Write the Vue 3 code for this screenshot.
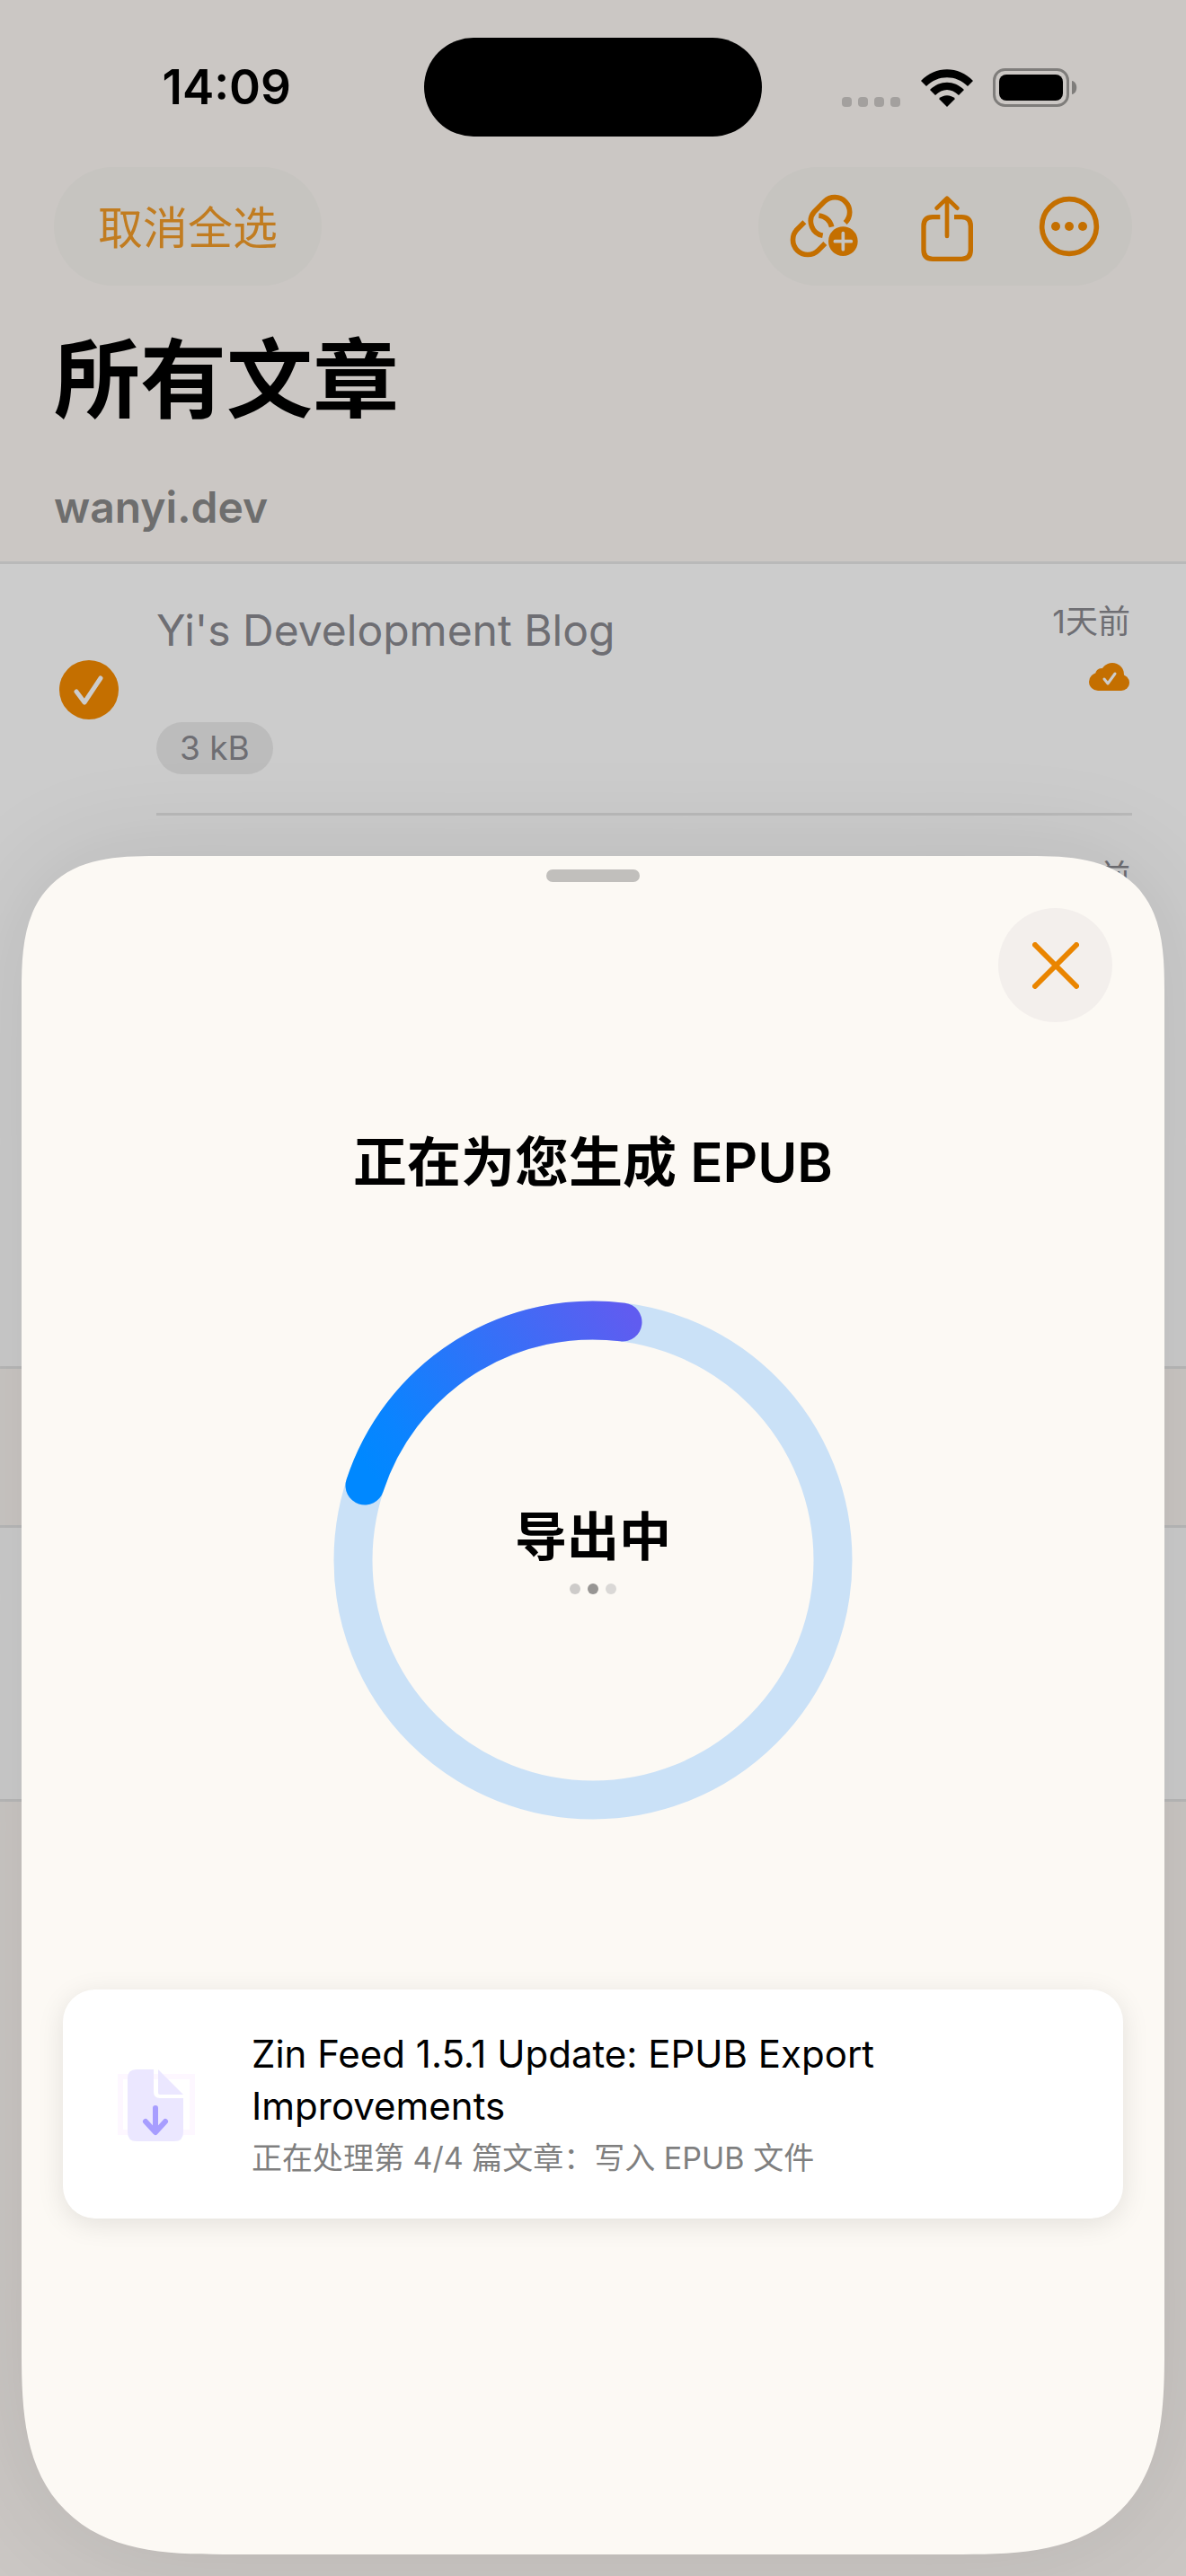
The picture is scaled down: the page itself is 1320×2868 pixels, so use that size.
<script setup>
import { ref } from 'vue'

const selected = ref(true)
const steps = ['rest', 'active', 'faint']
</script>

<template>
  <div class="screen">
    <div class="status">
      <time class="clock">14:09</time>
      <div class="island"></div>
      <div class="indicators">
        <div class="signal"><i v-for="n in 4" :key="n"></i></div>
        <svg class="wifi" viewBox="0 0 58 42" aria-hidden="true">
          <path d="M0 13C16 -4 42 -4 58 13L52 19C39 6 19 6 6 19Z" />
          <path d="M10 23C21 12 37 12 48 23L42 29C34 21 24 21 16 29Z" />
          <path d="M20 33C25 28 33 28 38 33L29 42Z" />
        </svg>
        <svg class="battery" viewBox="0 0 94 43" aria-hidden="true">
          <rect x="1.5" y="1.5" width="82" height="40" rx="12" fill="none" stroke="#7f7d7b" stroke-width="3" />
          <rect x="7" y="7" width="71" height="29" rx="8" />
          <path d="M88 14C95 15 95 28 88 29Z" fill="#7f7d7b" />
        </svg>
      </div>
    </div>

    <header class="toolbar">
      <button type="button" class="pill deselect">取消全选</button>
      <div class="pill actions">
        <button type="button" aria-label="link">
          <svg width="78" height="72" viewBox="60 78 234 216" fill="none" stroke="#c46f00" stroke-width="17">
            <path d="M245 174A49 49 0 0 0 176 103L142 137A49 49 0 0 0 170 217" />
            <path d="M109 172L85 196A49 49 0 0 0 155 266L178 243" />
            <path d="M157 150A48 48 0 0 1 200 188" />
            <circle cx="238" cy="236" r="49" fill="#c46f00" stroke="none" />
            <path d="M211 236H265M238 209V263" stroke="#c6c4c0" stroke-width="11" stroke-linecap="round" />
          </svg>
        </button>
        <button type="button" aria-label="share">
          <svg width="60" height="80" viewBox="494 66 180 240" fill="none" stroke="#c46f00" stroke-width="16">
            <path d="M561 155H536Q506 155 506 185V265Q506 295 536 295H633Q663 295 663 265V185Q663 155 633 155H608" />
            <path d="M584 94V219M550 125L584 92L618 125" stroke-width="14" stroke-linecap="round" stroke-linejoin="round" />
          </svg>
        </button>
        <button type="button" aria-label="more">
          <svg width="68" height="68" viewBox="0 0 204 204" fill="#c46f00">
            <circle cx="102" cy="102" r="91" fill="none" stroke="#c46f00" stroke-width="17" />
            <circle cx="57" cy="102" r="15" />
            <circle cx="102" cy="102" r="15" />
            <circle cx="147" cy="102" r="15" />
          </svg>
        </button>
      </div>
    </header>

    <h1>所有文章</h1>
    <h2>wanyi.dev</h2>

    <section class="group articles">
      <article class="row">
        <label class="check">
          <input v-model="selected" type="checkbox" aria-label="Yi's Development Blog" />
          <svg v-if="selected" viewBox="0 0 66 66" aria-hidden="true">
            <path d="M19 35L28 47L46 20" />
          </svg>
        </label>
        <div class="body">
          <div class="main">
            <h3>Yi's Development Blog</h3>
            <span class="size">3 kB</span>
          </div>
          <div class="meta">
            <time>1天前</time>
            <svg width="46" height="32" viewBox="0 0 46 32" aria-hidden="true">
              <g fill="#c46f00">
                <circle cx="10" cy="21" r="10" />
                <circle cx="14" cy="13" r="7" />
                <circle cx="26" cy="13" r="13" />
                <circle cx="36" cy="22" r="9" />
                <path d="M10 12H36V31H10Z" />
              </g>
              <path d="M17 18L21 23L29 12" fill="none" stroke="#cccccc" stroke-width="3" stroke-linecap="round" stroke-linejoin="round" />
            </svg>
          </div>
        </div>
      </article>
      <article class="row">
        <div class="check"></div>
        <div class="body">
          <div class="main"></div>
          <div class="meta"><time>1天前</time></div>
        </div>
      </article>
    </section>
    <section class="group following"></section>

    <div class="overlay">
      <main class="sheet" role="dialog" aria-labelledby="sheet-title">
        <div class="grabber"></div>
        <button type="button" class="close" aria-label="close">
          <svg width="52" height="52" viewBox="0 0 52 52" aria-hidden="true">
            <path d="M3 3L49 49M49 3L3 49" />
          </svg>
        </button>
        <h2 id="sheet-title" class="title">正在为您生成 EPUB</h2>
        <div class="progress">
          <svg class="ring" viewBox="0 0 578 578" aria-hidden="true">
            <defs>
              <linearGradient id="arc" gradientUnits="userSpaceOnUse" x1="60" y1="220" x2="340" y2="30">
                <stop offset="0" stop-color="#0088ff" />
                <stop offset="0.15" stop-color="#0a84ff" />
                <stop offset="1" stop-color="#605cf0" />
              </linearGradient>
            </defs>
            <circle cx="289" cy="289" r="267" stroke="#cae1f7" />
            <path d="M35 206A267 267 0 0 1 322 24" stroke="url(#arc)" stroke-linecap="round" />
          </svg>
          <div class="state">
            <strong>导出中</strong>
            <div class="dots"><i v-for="s in steps" :key="s" :class="s"></i></div>
          </div>
        </div>
        <section class="card">
          <svg class="file" width="88" height="82" viewBox="0 0 88 82" aria-hidden="true">
            <rect x="4" y="8" width="80" height="62" fill="none" stroke="#fdf7ff" stroke-width="6" />
            <path d="M22 0H41V25Q41 32 48 32H74V70Q74 80 64 80H22Q12 80 12 70V10Q12 0 22 0Z" fill="#ebe7ff" />
            <path d="M46 0L74 28H48Q46 28 46 26Z" fill="#ebe7ff" />
            <path d="M43 43V69M32 58L43 70L54 58" fill="none" stroke="#a79dff" stroke-width="6" stroke-linecap="round" stroke-linejoin="round" />
          </svg>
          <div class="info">
            <p class="name">Zin Feed 1.5.1 Update: EPUB Export Improvements</p>
            <p class="step">正在处理第 4/4 篇文章：写入 EPUB 文件</p>
          </div>
        </section>
      </main>
    </div>
  </div>
</template>

<style>
body {
  margin: 0;
}
</style>

<style scoped>
* {
  box-sizing: border-box;
}

.screen {
  position: relative;
  min-height: 100vh;
  overflow: hidden;
  background: #cbc7c4;
  color: #000;
  font-family: Inter, "Noto Sans CJK SC", sans-serif;
}

h1, h2, h3, p {
  margin: 0;
}

button {
  padding: 0;
  border: 0;
  background: none;
  font: inherit;
}

svg {
  display: block;
}

.status {
  display: grid;
  grid-template-columns: 1fr auto 1fr;
  align-items: center;
  padding: 42px 0 34px;
}

.clock {
  justify-self: end;
  margin-right: 148px;
  font-size: 53px;
  font-weight: 600;
}

.island {
  width: 376px;
  height: 110px;
  border-radius: 55px;
  background: #000;
}

.indicators {
  display: flex;
  align-items: flex-end;
  margin-left: 89px;
}

.signal {
  display: flex;
  gap: 7px;
}

.signal i {
  width: 11px;
  height: 11px;
  border-radius: 4px;
  background: #a3a09e;
}

.wifi {
  width: 58px;
  height: 42px;
  margin-left: 23px;
}

.battery {
  width: 94px;
  height: 43px;
  margin-left: 22px;
}

.toolbar {
  display: flex;
  justify-content: space-between;
  padding: 0 60px;
}

.pill {
  height: 132px;
  border-radius: 66px;
  background: #c6c4c0;
}

.deselect {
  padding: 0 49px 4px;
  color: #c17c20;
  font-size: 50px;
}

.actions {
  display: flex;
  padding: 0 2px 0 6px;
}

.actions button {
  display: grid;
  place-items: center;
  width: 136px;
}

h1 {
  padding: 34px 60px 0;
  font-size: 96px;
  line-height: 140px;
}

h2 {
  padding: 43px 60px 0;
  color: #6e6e6e;
  font-size: 48px;
  font-weight: 600;
  line-height: 60px;
}

.group {
  border: solid #b9b9b9;
  border-width: 3px 0;
  background: #ccc;
}

.articles {
  min-height: 899px;
  margin-top: 30px;
}

.following {
  min-height: 308px;
  margin-top: 174px;
}

.row {
  display: flex;
  padding: 0 60px 0 66px;
}

.row + .row {
  padding-top: 4px;
}

.check {
  display: grid;
  place-items: center;
  width: 108px;
  justify-content: start;
}

.check > * {
  grid-area: 1 / 1;
  width: 66px;
  height: 66px;
}

.check input {
  margin: 0;
  border-radius: 50%;
  appearance: none;
  background: #c46f00;
}

.check path {
  fill: none;
  stroke: #ccc;
  stroke-width: 5;
  stroke-linecap: round;
  stroke-linejoin: round;
}

.body {
  display: flex;
  flex: 1;
  justify-content: space-between;
  min-height: 280px;
  padding-top: 40px;
  border-bottom: 3px solid #b9b9b9;
  color: #6e6e73;
}

.main {
  display: flex;
  flex-direction: column;
  align-items: flex-start;
  gap: 68px;
}

h3 {
  font-size: 48px;
  font-weight: 400;
  line-height: 68px;
}

.size {
  padding: 0 26px;
  border-radius: 29px;
  background: #bcbcbc;
  font-size: 37px;
  line-height: 58px;
}

.meta {
  display: flex;
  flex-direction: column;
  align-items: flex-end;
  gap: 22px;
  padding-right: 2px;
  font-size: 36px;
  line-height: 48px;
}

.overlay {
  position: absolute;
  inset: 0;
  display: flex;
  padding: 953px 24px 24px;
}

.sheet {
  display: flex;
  flex: 1;
  flex-direction: column;
  padding: 15px 46px;
  border-radius: 108px 108px 162px 162px;
  background: #fcf9f4;
  box-shadow: 0 0 120px rgb(0 0 0 / 10%);
}

@supports (corner-shape: squircle) {
  .sheet {
    border-radius: 150px 150px 225px 225px;
    corner-shape: superellipse(1.5);
  }
}

.grabber {
  align-self: center;
  width: 104px;
  height: 14px;
  border-radius: 7px;
  background: #c1bfbc;
}

.close {
  display: grid;
  place-items: center;
  align-self: flex-end;
  width: 127px;
  height: 127px;
  margin: 29px 12px 0 0;
  border-radius: 50%;
  background: #f3efec;
}

.close path {
  stroke: #ea8500;
  stroke-width: 6;
  stroke-linecap: round;
}

.title {
  padding: 112px 0 0;
  color: #000;
  font-size: 60px;
  line-height: 88px;
  text-align: center;
}

.progress {
  display: grid;
  place-items: center;
  margin-top: 110px;
}

.progress > * {
  grid-area: 1 / 1;
}

.ring {
  width: 578px;
  height: 578px;
  fill: none;
  stroke-width: 43px;
}

.state {
  display: flex;
  flex-direction: column;
  align-items: center;
  gap: 10px;
  padding-bottom: 30px;
}

.state strong {
  font-size: 58px;
  font-weight: 600;
  line-height: 84px;
}

.dots {
  display: flex;
  gap: 8px;
}

.dots i {
  width: 12px;
  height: 12px;
  border-radius: 50%;
}

.rest {
  background: #cdcbc9;
}

.active {
  background: #979593;
}

.faint {
  background: #dad8d6;
}

.card {
  display: flex;
  align-items: center;
  gap: 62px;
  margin-top: 189px;
  padding: 43px 60px 38px;
  border-radius: 36px;
  background: #fff;
  box-shadow: 0 6px 30px rgb(0 0 0 / 10%);
}

.file {
  flex: none;
}

.info {
  flex: 1;
}

.name {
  max-width: 800px;
  font-size: 42px;
  line-height: 58px;
}

.step {
  color: #7f7f7f;
  font-size: 34px;
  line-height: 58px;
}
</style>
